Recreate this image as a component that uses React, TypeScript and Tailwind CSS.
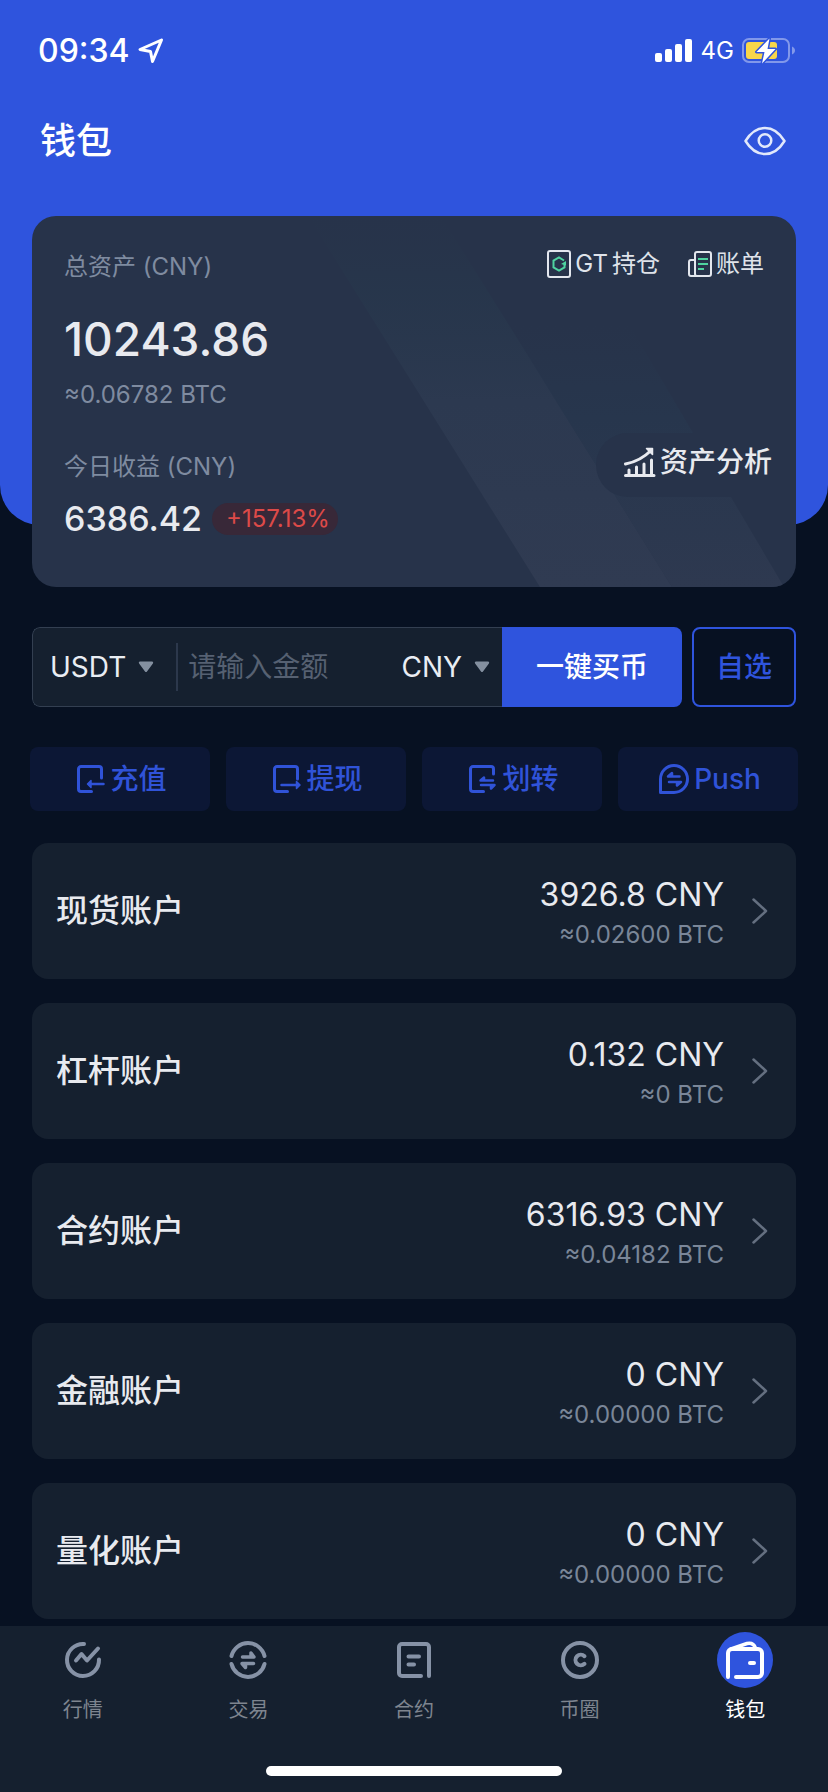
import { useState } from "react";
import type { ReactNode } from "react";
import clsx from "clsx";

type Account = { name: string; amount: string; btc: string };

const ACCOUNTS: Account[] = [
  { name: "现货账户", amount: "3926.8", btc: "0.02600" },
  { name: "杠杆账户", amount: "0.132", btc: "0" },
  { name: "合约账户", amount: "6316.93", btc: "0.04182" },
  { name: "金融账户", amount: "0", btc: "0.00000" },
  { name: "量化账户", amount: "0", btc: "0.00000" },
];

// ---- icons ----

const LocationIcon = () => (
  <svg width="26" height="26" viewBox="0 0 26 26" fill="none" stroke="currentColor" strokeWidth="3" strokeLinejoin="round">
    <path d="M23.5 2 2 11.5l10.5 2L14.500 23.500Z" />
  </svg>
);

const SignalIcon = () => (
  <svg width="38" height="24" viewBox="0 0 38 24" fill="currentColor">
    <rect x="0" y="14" width="7" height="9" rx="2" />
    <rect x="10" y="10" width="7" height="13" rx="2" />
    <rect x="20" y="5" width="7" height="18" rx="2" />
    <rect x="30" y="0" width="7" height="23" rx="2" />
  </svg>
);

const BatteryIcon = () => (
  <svg width="54" height="28" viewBox="0 0 54 28" fill="none">
    <rect x="1" y="2" width="46" height="23" rx="6" stroke="#fff" strokeOpacity="0.4" strokeWidth="2" />
    <path d="M50 9.500c4 1.500 4 6.500 0 8Z" fill="#fff" fillOpacity="0.4" />
    <rect x="4" y="5" width="31" height="17" rx="3" fill="#f8d64a" />
    <path d="M27.500 1.500 14.500 15h8l-2.500 11.500L33.500 12h-8Z" fill="#fff" stroke="#2f54dd" strokeWidth="3" strokeLinejoin="round" paintOrder="stroke" />
  </svg>
);

const EyeIcon = () => (
  <svg width="42" height="30" viewBox="0 0 42 30" fill="none" stroke="#e1e8fb" strokeWidth="2.500">
    <path d="M1.500 15C7 6 13.500 2 21 2s14 4 19.500 13C35 24 28.500 28 21 28S7 24 1.500 15Z" strokeLinejoin="round" />
    <circle cx="21" cy="14.500" r="6.300" />
  </svg>
);

const HoldingIcon = () => (
  <svg width="24" height="28" viewBox="0 0 24 28" fill="none">
    <rect x="1" y="1" width="22" height="26" rx="2" stroke="#e3e7ee" strokeWidth="2" />
    <path d="M17 10.500 12 7.500 6.500 10.700v6.600L12 20.500l5.500-3.200V13.500" stroke="#4fd3a0" strokeWidth="2" />
    <path d="M19 11v4.500L14 14Z" fill="#4fd3a0" />
  </svg>
);

const BillIcon = () => (
  <svg width="24" height="28" viewBox="0 0 24 28" fill="none" strokeWidth="2">
    <g stroke="#e3e7ee">
      <rect x="7" y="2" width="16" height="24" rx="2" />
      <path d="M7 10H3a2 2 0 0 0-2 2v12a2 2 0 0 0 2 2h6" />
    </g>
    <path d="M10 9h10M10 14h10M10 19h6" stroke="#4fd3a0" />
  </svg>
);

const AnalysisIcon = () => (
  <svg width="32" height="32" viewBox="0 0 32 32" fill="none" stroke="currentColor" strokeWidth="3" strokeLinecap="round">
    <path d="M1.500 29.500h28.500M5 28v-4M12.500 28v-7M20 28V18M27.500 28V14" />
    <path d="M1.500 18C12 16 20 11.500 27 4.500" />
    <path d="M22.500 2.500h6v6Z" fill="currentColor" strokeLinejoin="round" strokeWidth="1.500" />
  </svg>
);

const CaretIcon = () => (
  <svg width="16" height="14" viewBox="0 0 16 14" fill="#8490a0" className="pointer-events-none shrink-0">
    <path d="M2 1.500h12c1 0 1.500 1 .9 1.900L9 11.500c-.5.700-1.500.700-2 0L1.100 3.400C.5 2.500 1 1.500 2 1.500Z" />
  </svg>
);

const DepositIcon = () => (
  <svg width="28" height="28" viewBox="0 0 28 28" fill="none" stroke="currentColor" strokeWidth="3" strokeLinecap="round">
    <path d="M14.500 26.500H4A2.500 2.500 0 0 1 1.500 24V4A2.500 2.500 0 0 1 4 1.500h18A2.500 2.500 0 0 1 24.500 4v9" />
    <path d="M12 19h14.500" strokeWidth="2.500" />
    <path d="m10.500 19 3.500-3.500v7Z" fill="currentColor" strokeWidth="1.500" strokeLinejoin="round" />
  </svg>
);

const WithdrawIcon = () => (
  <svg width="28" height="28" viewBox="0 0 28 28" fill="none" stroke="currentColor" strokeWidth="3" strokeLinecap="round">
    <path d="M14.500 26.500H4A2.500 2.500 0 0 1 1.500 24V4A2.500 2.500 0 0 1 4 1.500h18A2.500 2.500 0 0 1 24.500 4v10" />
    <path d="M8.500 20H25" strokeWidth="2.500" />
    <path d="m27 20-3.500-3.500v7Z" fill="currentColor" strokeWidth="1.500" strokeLinejoin="round" />
  </svg>
);

const TransferIcon = () => (
  <svg width="28" height="28" viewBox="0 0 28 28" fill="none" stroke="currentColor" strokeWidth="3" strokeLinecap="round" strokeLinejoin="round">
    <path d="M14.500 26.500H4A2.500 2.500 0 0 1 1.500 24V4A2.500 2.500 0 0 1 4 1.500h18A2.500 2.500 0 0 1 24.500 4v5" />
    <path d="M24 15.500H11.500l3.500-3v3M12 20h13.500L22 23.500V20" strokeWidth="2.500" />
  </svg>
);

const PushIcon = () => (
  <svg width="30" height="30" viewBox="0 0 30 30" fill="none" stroke="currentColor" strokeWidth="3" strokeLinecap="round" strokeLinejoin="round">
    <path d="M1.500 28.500V15A13.500 13.500 0 1 1 15 28.500Z" />
    <path d="M20.500 12.500H9l4-3.500v3.500M10 18h12l-4 3.500V18" strokeWidth="2.500" />
  </svg>
);

const MarketIcon = () => (
  <svg width="38" height="38" viewBox="0 0 38 38" fill="none" stroke="currentColor" strokeWidth="4" strokeLinecap="round" strokeLinejoin="round">
    <path d="M20 3A16 16 0 1 0 35 18.500" />
    <path d="m12 19.500 5.500-6.500 5.500 6.500L34 7.500" />
  </svg>
);

const TradeIcon = () => (
  <svg width="38" height="38" viewBox="0 0 38 38" fill="none" stroke="currentColor" strokeWidth="4" strokeLinecap="round" strokeLinejoin="round">
    <path d="M2.500 15A17 17 0 0 1 35.500 15M2.500 23A17 17 0 0 0 35.500 23" />
    <path d="M13.500 16h11.500l-3-4v3M24.500 22.500H13l3.500 4v-3" strokeWidth="3.500" />
  </svg>
);

const ContractIcon = () => (
  <svg width="36" height="38" viewBox="0 0 36 38" fill="none" stroke="currentColor" strokeWidth="4" strokeLinecap="round">
    <path d="M33 35V6a3 3 0 0 0-3-3H6a3 3 0 0 0-3 3v26a3 3 0 0 0 3 3h19" />
    <path d="M12.500 15.500H23M12.500 23.500H18" />
  </svg>
);

const CircleIcon = () => (
  <svg width="38" height="38" viewBox="0 0 38 38" fill="none" stroke="currentColor" strokeWidth="4" strokeLinecap="round">
    <circle cx="19" cy="19" r="17" />
    <path d="M23.500 15.200a5.300 5.300 0 1 0 0 7.600" />
  </svg>
);

const WalletIcon = () => (
  <svg width="38" height="38" viewBox="0 0 38 38" fill="none" stroke="currentColor" strokeWidth="4" strokeLinecap="round" strokeLinejoin="round">
    <path d="M2 36V12a4 4 0 0 1 4-4h26a4 4 0 0 1 4 4v20a4 4 0 0 1-4 4H10" />
    <path d="M5 8 21 2.500C25 1.500 28 3 29.500 7" strokeWidth="3.500" />
    <path d="M24 22h4" />
  </svg>
);

const ACTIONS: { label: string; icon: ReactNode }[] = [
  { label: "充值", icon: <DepositIcon /> },
  { label: "提现", icon: <WithdrawIcon /> },
  { label: "划转", icon: <TransferIcon /> },
  { label: "Push", icon: <PushIcon /> },
];

const TABS: { label: string; icon: ReactNode }[] = [
  { label: "行情", icon: <MarketIcon /> },
  { label: "交易", icon: <TradeIcon /> },
  { label: "合约", icon: <ContractIcon /> },
  { label: "币圈", icon: <CircleIcon /> },
  { label: "钱包", icon: <WalletIcon /> },
];

// diagonal light bands behind the asset card
const CardBands = () => (
  <svg className="absolute inset-0 h-full w-full" viewBox="0 0 764 371" preserveAspectRatio="none" fill="none">
    <defs>
      <linearGradient id="band-a" x1="0" y1="0" x2="0" y2="371" gradientUnits="userSpaceOnUse">
        <stop offset="0" stopColor="#27364b" stopOpacity="0" />
        <stop offset="0.2" stopColor="#27374c" stopOpacity="0.7" />
        <stop offset="0.5" stopColor="#2c3950" />
        <stop offset="1" stopColor="#303b52" />
      </linearGradient>
      <linearGradient id="band-b" x1="0" y1="110" x2="0" y2="371" gradientUnits="userSpaceOnUse">
        <stop offset="0" stopColor="#27364d" stopOpacity="0" />
        <stop offset="0.35" stopColor="#27364d" />
        <stop offset="1" stopColor="#2e3950" />
      </linearGradient>
    </defs>
    <path d="M276 0h133l231 371H508Z" fill="url(#band-a)" />
    <path d="M477 110h121l154 261H640Z" fill="url(#band-b)" />
  </svg>
);

function CurrencySelect({ label, options }: { label: string; options: string[] }) {
  return (
    <label className="flex shrink-0 items-center gap-3">
      <select
        aria-label={label}
        className="appearance-none bg-transparent text-[28px] leading-10 text-[#e9edf3] outline-none [field-sizing:content]"
      >
        {options.map((o) => (
          <option key={o}>{o}</option>
        ))}
      </select>
      <CaretIcon />
    </label>
  );
}

function AccountRow({ account }: { account: Account }) {
  return (
    <button className="flex w-full items-center rounded-2xl bg-[#15202f] py-7 pr-7 pl-6 text-left">
      <span className="flex-1 text-[32px] leading-10 font-medium text-[#e8eaef]">{account.name}</span>
      <span className="flex flex-col items-end">
        <span className="text-[32px] leading-[48px] text-[#e8eaef]">{account.amount} CNY</span>
        <span className="text-2xl text-[#7a8698]">≈{account.btc} BTC</span>
      </span>
      <svg width="16" height="26" viewBox="0 0 16 26" fill="none" stroke="#646f80" strokeWidth="2.500" strokeLinecap="round" strokeLinejoin="round" className="ml-7">
        <path d="M1.500 1.500 14 13 1.500 24.500" />
      </svg>
    </button>
  );
}

export default function App() {
  const [tab, setTab] = useState("钱包");
  const [amount, setAmount] = useState("");

  return (
    <div className="flex min-h-screen flex-col bg-[#071122] font-['Inter','Noto_Sans_CJK_SC',sans-serif] text-white">
      <header className="rounded-b-[40px] bg-[#2f54dd] pt-[31px] pb-[356px]">
        <div className="flex items-center justify-between pr-8 pl-[38px]">
          <div className="flex items-center gap-2 text-[32px] leading-10 font-medium">
            <span>09:34</span>
            <LocationIcon />
          </div>
          <div className="flex items-center gap-2 text-2xl leading-10">
            <SignalIcon />
            <span>4G</span>
            <BatteryIcon />
          </div>
        </div>
        <div className="mt-[42px] flex items-center justify-between pr-[42px] pl-10">
          <h1 className="text-4xl leading-[56px] font-medium">钱包</h1>
          <button aria-label="显示或隐藏资产">
            <EyeIcon />
          </button>
        </div>
      </header>

      <main className="-mt-[309px] flex-1 px-8">
        {/* total assets */}
        <section className="relative flex justify-between overflow-hidden rounded-3xl bg-[#27334a] pl-8">
          <CardBands />
          <div className="relative pt-[35px] pb-12">
            <p className="text-2xl text-[#7f8ba0]">总资产 (CNY)</p>
            <p className="mt-6 text-[46px] leading-[64px] font-medium text-[#e8eaef]">10243.86</p>
            <p className="mt-2 text-2xl text-[#7f8ba0]">≈0.06782 BTC</p>
            <p className="mt-10 text-2xl text-[#7f8ba0]">今日收益 (CNY)</p>
            <div className="mt-4 flex items-center gap-[10px]">
              <span className="text-[34px] leading-10 font-medium text-[#e8eaef]">6386.42</span>
              <span className="rounded-full bg-[#382838] pr-2 pl-[14px] text-2xl text-[#dd4a48]">+157.13%</span>
            </div>
          </div>
          <div className="relative flex flex-col items-end justify-between pt-8 pb-[90px]">
            <div className="flex gap-7 pr-8 text-2xl text-[#dfe3ea]">
              <a href="#holding" className="flex items-center gap-1">
                <HoldingIcon />
                <span>GT</span>
                <span>持仓</span>
              </a>
              <a href="#bill" className="flex items-center gap-1">
                <BillIcon />
                账单
              </a>
            </div>
            <button className="flex h-16 items-center gap-1 rounded-l-full bg-[#27334a] pr-6 pb-[6px] pl-7 text-[28px] font-medium text-[#e8eaef]">
              <AnalysisIcon />
              资产分析
            </button>
          </div>
        </section>

        {/* quick buy */}
        <form className="mt-10 flex gap-[10px]" onSubmit={(e) => e.preventDefault()}>
          <div className="flex h-20 min-w-0 flex-1 overflow-hidden rounded-lg">
            <div className="flex min-w-0 flex-1 items-center rounded-l-lg border border-r-0 border-[#333f51] bg-[#15202f] pr-3 pl-[17px]">
              <CurrencySelect label="币种" options={["USDT", "BTC", "ETH"]} />
              <div className="mr-[10px] ml-[22px] h-12 w-[2px] shrink-0 bg-[#2c384c]" />
              <input
                aria-label="金额"
                placeholder="请输入金额"
                value={amount}
                onChange={(e) => setAmount(e.target.value)}
                className="w-0 min-w-0 flex-1 bg-transparent text-[28px] leading-10 outline-none placeholder:text-[#566172]"
              />
              <CurrencySelect label="法币" options={["CNY", "USD"]} />
            </div>
            <button className="w-[180px] shrink-0 bg-[#2f54dd] text-[28px] font-medium">一键买币</button>
          </div>
          <button type="button" className="w-[104px] rounded-lg border-2 border-[#2f54dd] text-[28px] font-medium text-[#2f54dd]">
            自选
          </button>
        </form>

        <div className="-mx-[2px] mt-10 grid grid-cols-4 gap-4">
          {ACTIONS.map((a) => (
            <button
              key={a.label}
              className="flex h-16 items-center justify-center gap-[5px] rounded-lg bg-[#0c1735] pl-1 text-[28px] font-medium text-[#3053d8]"
            >
              {a.icon}
              {a.label}
            </button>
          ))}
        </div>

        <div className="mt-8 flex flex-col gap-6">
          {ACCOUNTS.map((a) => (
            <AccountRow key={a.name} account={a} />
          ))}
        </div>
      </main>

      <nav className="sticky bottom-0 bg-[#15202f] pt-[6px] pb-4">
        <div className="grid grid-cols-5">
          {TABS.map((t) => (
            <button
              key={t.label}
              onClick={() => setTab(t.label)}
              className={clsx("flex flex-col items-center gap-[10px]", tab === t.label ? "text-white" : "text-[#8692a6]")}
            >
              <span className={clsx("flex size-14 items-center justify-center rounded-full", tab === t.label && "bg-[#2f54dd]")}>
                {t.icon}
              </span>
              <span className={clsx("text-xl leading-6", tab !== t.label && "text-[#7e858f]")}>{t.label}</span>
            </button>
          ))}
        </div>
        <div className="mx-auto mt-11 h-[10px] w-[296px] rounded-full bg-white" />
      </nav>
    </div>
  );
}
